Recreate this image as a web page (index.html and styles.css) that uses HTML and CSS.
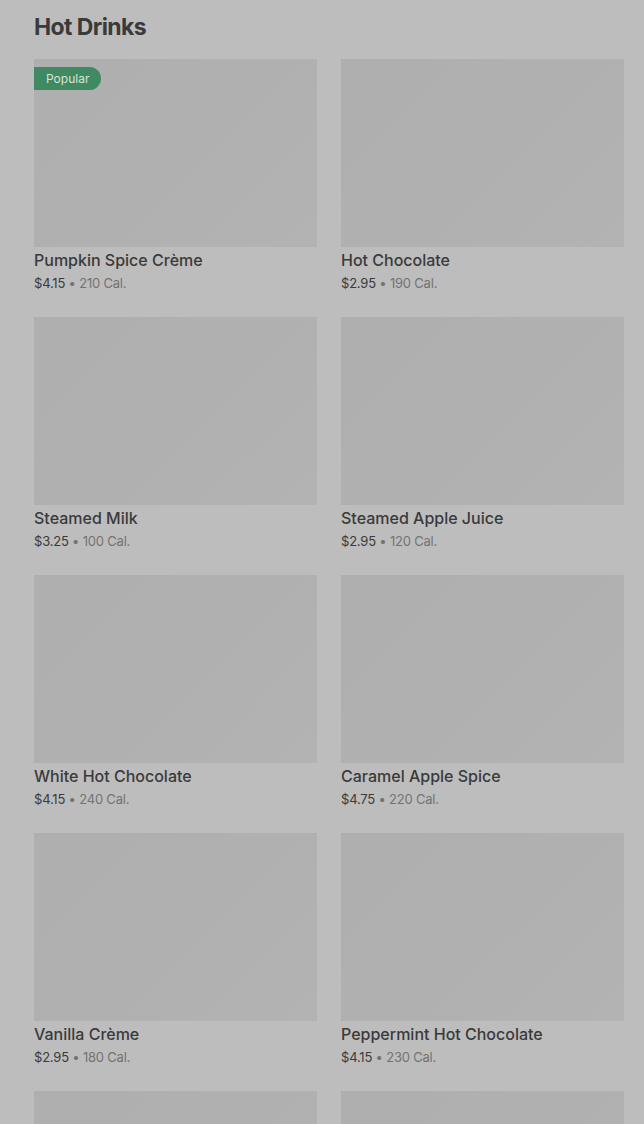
FILE: index.html
```html
<!DOCTYPE html>
<html lang="en">
<head>
<meta charset="utf-8">
<title>Hot Drinks</title>
<link rel="stylesheet" href="styles.css">
</head>
<body>
<main class="section">
  <h2 class="section-title">Hot Drinks</h2>
  <div class="grid">
    <div class="item">
      <div class="thumb"><span class="badge">Popular</span></div>
      <div class="name">Pumpkin Spice Crème</div>
      <div class="meta"><span class="price">$4.15</span><span class="sep"> • </span><span class="cal">210 Cal.</span></div>
    </div>
    <div class="item">
      <div class="thumb"></div>
      <div class="name">Hot Chocolate</div>
      <div class="meta"><span class="price">$2.95</span><span class="sep"> • </span><span class="cal">190 Cal.</span></div>
    </div>
    <div class="item">
      <div class="thumb"></div>
      <div class="name">Steamed Milk</div>
      <div class="meta"><span class="price">$3.25</span><span class="sep"> • </span><span class="cal">100 Cal.</span></div>
    </div>
    <div class="item">
      <div class="thumb"></div>
      <div class="name">Steamed Apple Juice</div>
      <div class="meta"><span class="price">$2.95</span><span class="sep"> • </span><span class="cal">120 Cal.</span></div>
    </div>
    <div class="item">
      <div class="thumb"></div>
      <div class="name">White Hot Chocolate</div>
      <div class="meta"><span class="price">$4.15</span><span class="sep"> • </span><span class="cal">240 Cal.</span></div>
    </div>
    <div class="item">
      <div class="thumb"></div>
      <div class="name">Caramel Apple Spice</div>
      <div class="meta"><span class="price">$4.75</span><span class="sep"> • </span><span class="cal">220 Cal.</span></div>
    </div>
    <div class="item">
      <div class="thumb"></div>
      <div class="name">Vanilla Crème</div>
      <div class="meta"><span class="price">$2.95</span><span class="sep"> • </span><span class="cal">180 Cal.</span></div>
    </div>
    <div class="item">
      <div class="thumb"></div>
      <div class="name">Peppermint Hot Chocolate</div>
      <div class="meta"><span class="price">$4.15</span><span class="sep"> • </span><span class="cal">230 Cal.</span></div>
    </div>
    <div class="item">
      <div class="thumb"></div>
      <div class="name">&nbsp;</div>
      <div class="meta">&nbsp;</div>
    </div>
    <div class="item">
      <div class="thumb"></div>
      <div class="name">&nbsp;</div>
      <div class="meta">&nbsp;</div>
    </div>
  </div>
</main>
</body>
</html>
```

FILE: styles.css
```css
html, body {
  margin: 0;
  padding: 0;
  background: #bdbdbd;
  overflow: hidden;
}

body {
  font-family: Inter, "Noto Sans", "Liberation Sans", sans-serif;
  color: #3a3a3a;
}

.section {
  padding: 12px 20px 0 34px;
}

.section-title {
  margin: 0;
  font-size: 23px;
  line-height: 30px;
  font-weight: 700;
  letter-spacing: -0.6px;
  color: #3a3a3a;
}

.grid {
  margin-top: 17px;
  display: grid;
  grid-template-columns: 1fr 1fr;
  column-gap: 24px;
  row-gap: 24px;
}

.item {
  display: flex;
  flex-direction: column;
}

.thumb {
  position: relative;
  height: 188px;
  background: linear-gradient(135deg, #afafaf 0%, #b0b0b0 50%, #b3b3b3 100%);
}

.badge {
  position: absolute;
  top: 8px;
  left: 0;
  height: 23px;
  padding: 0 12px;
  display: flex;
  align-items: center;
  background: #3f8a62;
  color: #d6e4dc;
  font-size: 12px;
  border-radius: 0 12px 12px 0;
}

.name {
  margin-top: 1px;
  font-size: 16px;
  line-height: 24px;
  font-weight: 500;
  color: #3a3a3a;
}

.meta {
  margin-top: 1px;
  font-size: 13px;
  line-height: 20px;
  letter-spacing: -0.2px;
}

.price {
  color: #3a3a3a;
}

.sep, .cal {
  color: #737373;
}
```
